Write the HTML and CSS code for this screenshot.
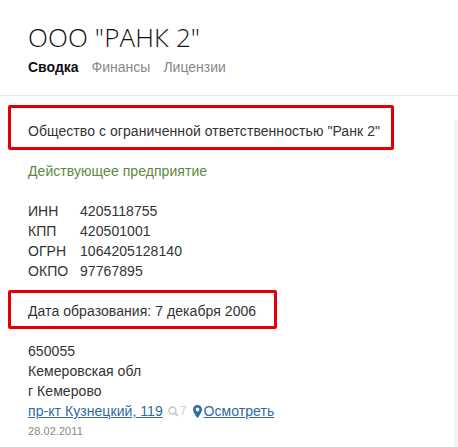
FILE: index.html
```html
<!DOCTYPE html>
<html lang="ru">

<head>
    <meta charset="utf-8">
    <title>ООО "РАНК 2"</title>
    <link rel="stylesheet" href="styles.css">
</head>

<body>
    <header class="top">
        <h1>ООО "РАНК 2"</h1>
        <nav class="tabs">
            <a class="tab active">Сводка</a>
            <a class="tab">Финансы</a>
            <a class="tab">Лицензии</a>
        </nav>
    </header>

    <main class="content">
        <aside class="side"></aside>

        <p class="boxed box-name">Общество с ограниченной ответственностью "Ранк 2"</p>

        <p class="status">Действующее предприятие</p>

        <dl class="codes">
            <div class="code"><dt>ИНН</dt><dd>4205118755</dd></div>
            <div class="code"><dt>КПП</dt><dd>420501001</dd></div>
            <div class="code"><dt>ОГРН</dt><dd>1064205128140</dd></div>
            <div class="code"><dt>ОКПО</dt><dd>97767895</dd></div>
        </dl>

        <p class="boxed box-date">Дата образования: 7 декабря 2006</p>

        <address class="addr">
            <div>650055</div>
            <div>Кемеровская обл</div>
            <div>г Кемерово</div>
            <div class="street">
                <a href="#">пр-кт Кузнецкий, 119</a>
                <span class="views">
                    <svg width="11" height="11" viewBox="0 0 11 11"><circle cx="4.5" cy="4.5" r="3.4" fill="none" stroke="#ccc" stroke-width="1.6"/><path d="M7 7l3 3" stroke="#ccc" stroke-width="2"/></svg>7
                </span>
                <span class="look">
                    <svg width="9" height="13" viewBox="0 0 9 13"><path fill-rule="evenodd" d="M4.5 0C2 0 0 2 0 4.4 0 7.4 4.5 13 4.5 13S9 7.4 9 4.4C9 2 7 0 4.5 0zm0 2.6a1.9 1.9 0 1 1 0 3.8 1.9 1.9 0 0 1 0-3.8z" fill="#2c6ba8"/></svg>
                    <a href="#">Осмотреть</a>
                </span>
            </div>
            <div class="date">28.02.2011</div>
        </address>
    </main>
</body>

</html>
```
FILE: styles.css
```css
* {
    box-sizing: border-box;
}

body {
    margin: 0;
    height: 447px;
    overflow: hidden;
    background: #fff;
    color: #333;
    font-family: "Liberation Sans", Arial, sans-serif;
    font-size: 14px;
    line-height: 20px;
    letter-spacing: 0.06px;
}

.top {
    height: 96px;
    padding: 22px 28px 0;
    border-bottom: 1px solid #e5e5e5;
}

h1 {
    margin: 0;
    font-family: "Open Sans", sans-serif;
    font-weight: 300;
    font-size: 26px;
    line-height: 30px;
    letter-spacing: 0.12px;
    color: #111;
}

.tabs {
    display: flex;
    gap: 13px;
    margin-top: 5px;
    letter-spacing: 0;
}

.tab {
    color: #888;
}

.active {
    color: #111;
    font-weight: bold;
}

.content {
    position: relative;
    padding: 0 8px;
}

.side {
    position: absolute;
    top: 15px;
    right: 0;
    width: 4px;
    height: 336px;
    background: #f3f3f3;
}

p {
    margin: 0;
}

.boxed {
    border: 3px solid #e30000;
    border-radius: 2px;
    padding-left: 17px;
    display: flex;
    align-items: center;
}

.box-name {
    width: 386px;
    height: 45px;
    margin-top: 9px;
    padding-top: 6px;
}

.box-date {
    width: 269px;
    height: 39px;
    margin-top: 9px;
    padding-top: 3px;
}

.status {
    margin-top: 11px;
    padding-left: 20px;
    color: #5b8a3c;
}

.codes {
    margin: 20px 0 0;
    padding-left: 20px;
}

.code {
    display: flex;
}

dt {
    width: 52px;
}

dd {
    margin: 0;
}

.addr {
    margin-top: 12px;
    padding-left: 20px;
    font-style: normal;
}

.street {
    display: flex;
    align-items: center;
}

.street a {
    color: #2c6ba8;
}

.views {
    display: flex;
    align-items: center;
    gap: 1px;
    margin-left: 5px;
    font-size: 12px;
    color: #ccc;
}

.look {
    display: flex;
    align-items: center;
    gap: 2px;
    margin-left: 6px;
}

.date {
    font-size: 11px;
    color: #888;
}
```
